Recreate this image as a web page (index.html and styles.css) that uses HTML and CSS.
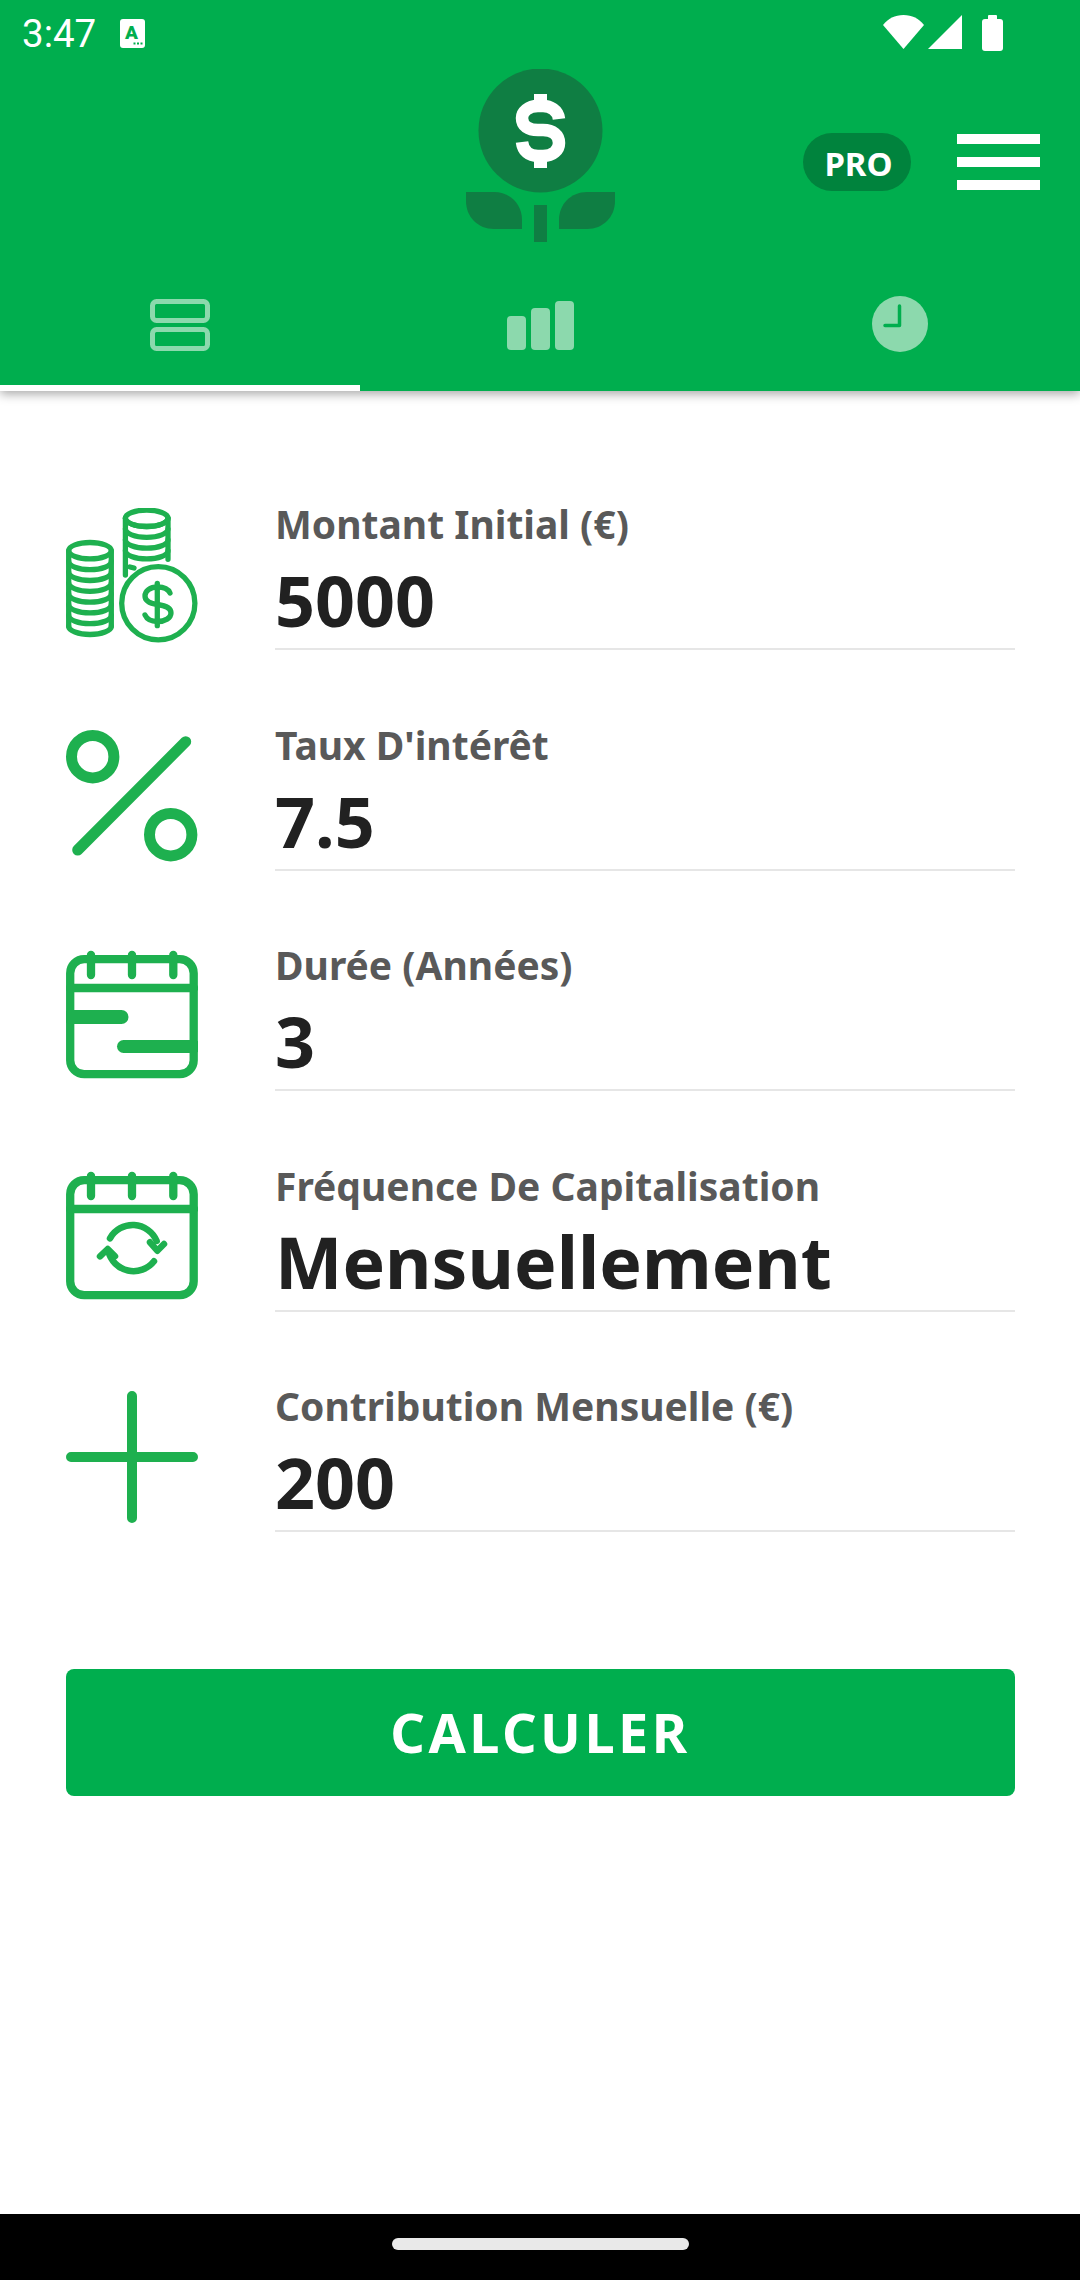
FILE: index.html
```html
<!DOCTYPE html>
<html lang="fr">
<head>
  <meta charset="UTF-8">
  <meta name="viewport" content="width=device-width, initial-scale=1.0">
  <title>Calculer</title>
  <link rel="stylesheet" href="styles.css">
</head>
<body>
  <div class="screen">
    <header class="app-header">
      <div class="status-bar">
        <div class="status-left">
          <span class="time">3:47</span>
          <svg class="status-a" viewBox="0 0 25 29">
            <rect width="25" height="29" rx="3" fill="#fff"/>
            <text x="11.5" y="20" text-anchor="middle" class="status-a-letter">A</text>
            <rect x="13.5" y="23.5" width="2" height="2" fill="#00ae4e"/>
            <rect x="17" y="23.5" width="2" height="2" fill="#00ae4e"/>
            <rect x="20.5" y="23.5" width="2" height="2" fill="#00ae4e"/>
          </svg>
        </div>
        <svg class="status-right" viewBox="883 15 120 36">
          <path d="M903.5 49 L883 25 C888 18.500 895 15 903.500 15 C912 15 919 18.500 924 25 Z" fill="#fff"/>
          <path d="M962 15 V49 H928 Z" fill="#fff"/>
          <rect x="988" y="15" width="9" height="8" rx="1" fill="#fff"/>
          <rect x="982" y="19" width="21" height="32" rx="3" fill="#fff"/>
        </svg>
      </div>

      <div class="top-bar">
        <div></div>
        <svg class="logo" viewBox="466 69 149 173">
          <circle cx="540.500" cy="130.500" r="62" fill="#0f7e43"/>
          <path d="M559 119 C558 110 550 106 543 106 H538 C528 106 522 112 522 118 C522 126 528 130 538 130 H543 C553 130 559 135 559 143 C559 150 553 156 543 156 H538 C529 156 523 151 522 142" fill="none" stroke="#fff" stroke-width="12.500"/>
          <rect x="534" y="94" width="13" height="13" fill="#fff"/>
          <rect x="534" y="155" width="13" height="13" fill="#fff"/>
          <path d="M466 192 H494 C510 192 522 204 522 220 V229 H494 C478 229 466 217 466 201 Z" fill="#0f7e43"/>
          <path d="M615 192 H587 C571 192 559 204 559 220 V229 H587 C603 229 615 217 615 201 Z" fill="#0f7e43"/>
          <rect x="534" y="205" width="13" height="37" fill="#0f7e43"/>
        </svg>
        <div class="top-actions">
          <span class="pro-badge">PRO</span>
          <div class="menu-btn"><span></span><span></span><span></span></div>
        </div>
      </div>

      <nav class="tabs">
        <div class="tab active">
          <svg viewBox="0 0 60 60" class="tab-icon">
            <rect x="2.500" y="7.500" width="55" height="19" rx="4" fill="none" stroke="#8cd9ad" stroke-width="5"/>
            <rect x="2.500" y="35.500" width="55" height="19" rx="4" fill="none" stroke="#8cd9ad" stroke-width="5"/>
          </svg>
        </div>
        <div class="tab">
          <svg viewBox="0 0 68 60" class="tab-icon wide">
            <rect x="1" y="22" width="19" height="34" rx="4" fill="#8cd9ad"/>
            <rect x="25" y="14" width="19" height="42" rx="4" fill="#8cd9ad"/>
            <rect x="49" y="7" width="19" height="49" rx="4" fill="#8cd9ad"/>
          </svg>
        </div>
        <div class="tab">
          <svg viewBox="0 0 60 60" class="tab-icon">
            <circle cx="30" cy="30" r="28" fill="#8cd9ad"/>
            <path d="M29.500 12 V31.500 H15" fill="none" stroke="#00ae4e" stroke-width="3.500" stroke-linecap="round" stroke-linejoin="round"/>
          </svg>
        </div>
      </nav>
    </header>

    <main class="form">
      <div class="row">
        <svg class="row-icon" viewBox="0 1 132 136">
          <g class="line thin">
            <path d="M59.400 11.300 V68 M102 11.300 V52.300"/>
            <ellipse cx="80.700" cy="11.300" rx="21.300" ry="8.200"/>
            <path d="M59.400 11.300 A21.300 8.200 0 0 0 102 11.300"/>
            <path d="M59.400 22.100 A21.300 8.200 0 0 0 102 22.100"/>
            <path d="M59.400 32.900 A21.300 8.200 0 0 0 102 32.900"/>
            <path d="M59.400 43.700 A21.300 8.200 0 0 0 102 43.700"/>
            <path d="M64 60 L68 61"/>
            <path d="M2.700 43.700 V119.300 M45.300 43.700 V119.300"/>
            <ellipse cx="24" cy="43.700" rx="21.300" ry="8.200"/>
            <path d="M2.700 54.500 A21.300 8.200 0 0 0 45.300 54.500"/>
            <path d="M2.700 65.300 A21.300 8.200 0 0 0 45.300 65.300"/>
            <path d="M2.700 76.100 A21.300 8.200 0 0 0 45.300 76.100"/>
            <path d="M2.700 86.900 A21.300 8.200 0 0 0 45.300 86.900"/>
            <path d="M2.700 97.700 A21.300 8.200 0 0 0 45.300 97.700"/>
            <path d="M2.700 108.500 A21.300 8.200 0 0 0 45.300 108.500"/>
            <path d="M2.700 119.300 A21.300 8.200 0 0 0 45.300 119.300"/>
            <circle cx="92.300" cy="96.300" r="36.600" fill="#fff"/>
            <path d="M91.300 76.300 V118.700"/>
            <path d="M104 86 C102 81.500 97 80 91.500 80 C84 80 79 84 79 89 C79 94 84 96.500 91.500 97.500 C99 98.500 105 101 105 106 C105 111 99 114.500 91.500 114.500 C86 114.500 81 112.500 79 108"/>
          </g>
        </svg>
        <div class="field">
          <label class="field-label">Montant Initial (€)</label>
          <div class="field-value">5000</div>
        </div>
      </div>

      <div class="row">
        <svg class="row-icon" viewBox="0 1 132 136">
          <g class="line bold">
            <circle cx="26.700" cy="28.700" r="21.200"/>
            <circle cx="104.700" cy="106.700" r="21.200"/>
            <path d="M11.700 122 L119.700 13.700"/>
          </g>
        </svg>
        <div class="field">
          <label class="field-label">Taux D'intérêt</label>
          <div class="field-value">7.5</div>
        </div>
      </div>

      <div class="row">
        <svg class="row-icon" viewBox="0 0 132 136">
          <g class="line cal">
            <rect x="4.200" y="10.200" width="123.500" height="115" rx="14"/>
            <path d="M25 6 V26 M66 6 V26 M107.300 6 V26"/>
            <path d="M4 39 H128"/>
          </g>
          <path d="M4 68 H55.500" class="line bar-a"/>
          <path d="M57.500 97.500 H128" class="line bar-b"/>
        </svg>
        <div class="field">
          <label class="field-label">Durée (Années)</label>
          <div class="field-value">3</div>
        </div>
      </div>

      <div class="row">
        <svg class="row-icon" viewBox="0 0 132 136">
          <g class="line cal">
            <rect x="4.200" y="10.200" width="123.500" height="115" rx="14"/>
            <path d="M25 6 V26 M66 6 V26 M107.300 6 V26"/>
            <path d="M4 39 H128"/>
          </g>
          <g class="line refresh">
            <path d="M44 68.300 A26 26 0 0 1 90.700 71"/>
            <path d="M84 72.300 L91.300 80.700 L98 74"/>
            <path d="M88 91.300 A26 26 0 0 1 42.300 81"/>
            <path d="M34 86.300 L41.700 79 L49 86.300"/>
          </g>
        </svg>
        <div class="field">
          <label class="field-label">Fréquence De Capitalisation</label>
          <div class="field-value wordy">Mensuellement</div>
        </div>
      </div>

      <div class="row">
        <svg class="row-icon" viewBox="0 0 132 136">
          <path d="M66 6 V128 M5 67 H127" class="line plus"/>
        </svg>
        <div class="field">
          <label class="field-label">Contribution Mensuelle (€)</label>
          <div class="field-value">200</div>
        </div>
      </div>

      <button class="calc-btn">CALCULER</button>
    </main>

    <div class="nav-bar"><span class="home-pill"></span></div>
  </div>
</body>
</html>
```

FILE: styles.css
```css
* {margin:0; padding:0; box-sizing:border-box}
body {background:#fff; font-family:"Noto Sans", sans-serif;}

.screen {display:flex; flex-direction:column; width:1080px; height:2280px; overflow:hidden;}

/* header */
.app-header {position:relative; z-index:2; height:391px; background:#00ae4e; box-shadow:0 3px 10px rgba(0,0,0,.35);}

.status-bar {display:flex; justify-content:space-between; align-items:flex-start; height:66px; padding:15px 77px 0 22px;}
.status-left {display:flex; align-items:center; gap:24px; padding-top:4px;}
.time {font-family:Roboto, sans-serif; font-size:38.500px; line-height:29px; color:#fff;}
.status-a {display:block; width:25px; height:29px;}
.status-a-letter {font-family:Roboto, sans-serif; font-weight:900; font-size:19px; fill:#00ae4e;}
.status-right {display:block; width:120px; height:36px;}

.top-bar {display:grid; grid-template-columns:1fr 149px 1fr; height:214px; padding-top:3px;}
.logo {display:block; width:149px; height:173px;}
.top-actions {display:flex; align-items:center; justify-content:flex-end; gap:46px; height:58px; margin-top:64px; padding-right:40px;}
.pro-badge {display:flex; align-items:center; justify-content:center; width:108px; height:58px; padding:2px 0 0 3px; border-radius:29px; background:#00833d; color:#fff; font-size:33px; font-weight:700;}
.menu-btn {display:flex; flex-direction:column; gap:13px; width:83px;}
.menu-btn span {display:block; height:10px; background:#fff;}

.tabs {display:grid; grid-template-columns:repeat(3, 1fr); height:111px;}
.tab {display:flex; justify-content:center; padding-top:14px; height:111px;}
.tab.active {border-bottom:6px solid #fff;}
.tab-icon {display:block; width:60px; height:60px;}
.tab-icon.wide {width:68px;}

/* form */
.form {flex:1; display:flex; flex-direction:column; gap:72.6px; padding:111px 65px 0 66px;}
.row {display:flex; align-items:center; gap:77px;}
.row-icon {flex:none; display:block; width:132px; height:136px;}
.field {flex:1; height:148px; border-bottom:2px solid #e6e6e6;}
.field-label {display:block; height:50px; font-size:39px; line-height:44px; font-weight:700; color:#595959;}
.field-value {font-size:70px; line-height:96px; font-weight:700; color:#212121;}
.field-value.wordy {font-size:71.500px;}

.line {fill:none; stroke:#1eb04f; stroke-linecap:round; stroke-linejoin:round;}
.line.thin {stroke-width:5.300;}
.line.bold {stroke-width:11;}
.line.cal {stroke-width:8.300;}
.bar-a {stroke-width:14;}
.bar-b {stroke-width:13;}
.line.refresh {stroke-width:6.500;}
.line.plus {stroke-width:10;}

.calc-btn {height:127px; margin-top:64px; border:0; border-radius:8px; background:#00ae4e; color:#fff; font-family:inherit; font-size:54px; font-weight:700; letter-spacing:3.500px;}

/* android nav */
.nav-bar {display:flex; justify-content:center; align-items:center; height:66px; background:#000;}
.home-pill {width:297px; height:12px; border-radius:6px; background:#e9e9e9; margin-top:-7px;}
```
